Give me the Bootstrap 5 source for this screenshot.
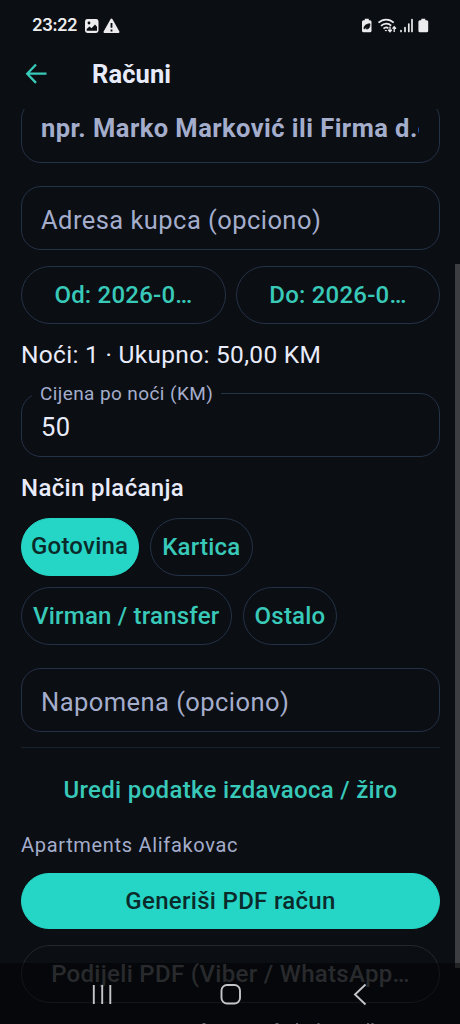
<!DOCTYPE html>
<html lang="bs">
<head>
<meta charset="utf-8">
<meta name="viewport" content="width=device-width, initial-scale=1">
<title>Računi</title>
<link href="https://cdn.jsdelivr.net/npm/bootstrap@5.3.0/dist/css/bootstrap.min.css" rel="stylesheet">
<style>
:root{--bg:#0b0e13;--teal:#25d6c7;--line:#243246;--muted:#a4adcb;--ink:#e8ebfa}
body{background:var(--bg);color:var(--ink);font-family:Roboto,"Noto Sans",sans-serif;height:1024px;overflow:hidden;line-height:1;white-space:nowrap}
.phone{width:460px;height:1024px}
.statusbar{height:50px;padding:1px 31px 0 32px;color:#ececee}
.clock{font-family:Inter,Roboto,sans-serif;font-size:17px;font-weight:600;letter-spacing:-.6px}
.topbar{height:59px;padding:0 0 11px 25px}
.topbar h1{font-size:25.5px;font-weight:700;margin-left:44px;padding-top:1px;letter-spacing:.1px}
.scroll-area{height:915px;overflow:hidden;padding:0 20px 0 21px}
.field{height:64px;border:1px solid var(--line);border-radius:20px;padding:5px 19px 0;color:var(--muted);font-size:25.5px;letter-spacing:.45px;position:relative}
.field.first{margin-top:-10px;font-weight:700;letter-spacing:.45px;padding:0 20px 4px 19px}
.field.priced{color:var(--ink);padding-top:6px;letter-spacing:.3px}
.pill{height:58px;border:1px solid var(--line);border-radius:29px;color:#38c9b9;font-size:24px;font-weight:500;letter-spacing:.22px;padding:0 11px;line-height:1}
.pill:hover{border-color:var(--line);color:#38c9b9}
.pill.on,.pill.on:hover{background:var(--teal);border-color:var(--teal);color:#0b2b2b}
.pill.tight{padding:0 10px 2px 9px}
.pill.main-action{height:56px;letter-spacing:.3px}
.pill.share:disabled{border-color:#24272c;color:#4a4d52;opacity:1;height:58px;letter-spacing:.3px}
.floating{position:absolute;left:10px;top:-11px;padding:0 8px;background:var(--bg);color:var(--muted);font-size:19px;line-height:22px;letter-spacing:.4px}
.summary{height:69px;font-size:24.5px;padding-bottom:7px;letter-spacing:.3px}
.section-title{height:61px;font-size:24px;font-weight:500;letter-spacing:.35px}
.rule{height:1px;background:#1a222d;margin-top:15px}
.edit-link{font-size:24px;font-weight:500;color:#38c9b9;letter-spacing:.32px;margin-top:30px}
.issuer{font-size:20px;color:var(--muted);letter-spacing:.68px;margin-top:33px}
.thumb{position:absolute;right:0;top:264px;width:5px;height:704px;background:#3c3e42}
.navshade{position:absolute;left:0;right:0;bottom:0;height:61px;background:rgba(0,0,0,.45)}
.navshade svg{display:block}
</style>
</head>
<body>
<div class="phone position-relative">
  <header class="statusbar d-flex align-items-center">
    <span class="clock">23:22</span>
    <svg class="ms-2" width="36" height="16" viewBox="0 0 36 16"><rect x="0" y="1" width="13.5" height="14" rx="2.4" fill="#ececee"/><circle cx="4" cy="5" r="1.4" fill="#0b0e13"/><path d="M1.7 12.800V11l2.800-2.500 2 1.800L10 6.500l2 2.300v4z" fill="#0b0e13"/><path d="M26.500 1.500 33.500 14H19.500z" fill="#ececee" stroke="#ececee" stroke-width="2" stroke-linejoin="round"/><path d="M26.500 5v4.800M26.500 11.500v2" stroke="#0b0e13" stroke-width="1.800"/></svg>
    <svg class="ms-auto" width="68" height="16" viewBox="0 0 68 16" fill="none"><path d="M3.800.8h4v1.500H9q1.500 0 1.500 1.500v9q0 1.500-1.500 1.500H2.500Q1 14.300 1 12.800v-9q0-1.500 1.500-1.500h1.300z" fill="#ececee"/><path d="M3 11.200C2.500 7 6 6 9 5.800c0 4-1.500 6-4.300 4.800L7 8.300" fill="#0b0e13" stroke="#0b0e13" stroke-width=".7"/><path d="M17.500 4.700c4.600-4.200 10.800-4.200 15.200 0M20 7.900c3-2.900 7.400-2.900 10.200-.3M22.500 10.700c1.500-1.500 3.500-1.500 4.900-.4" stroke="#ececee" stroke-width="1.700"/><path d="m23.500 12 1.500 1.600 1.300-1.600z" fill="#ececee"/><path d="M29 8.500v5m-1.800-1.700 1.800 2 1.800-2M33.200 14V9m-1.700 1.700 1.700-2 1.800 2" stroke="#ececee" stroke-width="1.300"/><path d="M40 12.500v1M44 9.500v4M47.800 6v7.500M51 1.500v12" stroke="#ececee" stroke-width="1.700" stroke-linecap="round"/><path d="M60.300.8h4v1.500h1.400q1.500 0 1.500 1.500v9q0 1.500-1.500 1.500h-6.800q-1.500 0-1.500-1.500v-9q0-1.500 1.500-1.500h1.400z" fill="#ececee"/></svg>
  </header>
  <nav class="topbar d-flex align-items-center">
    <svg width="23" height="22" viewBox="0 0 23 22" fill="none" stroke="#38c9b9" stroke-width="2.300"><path d="M11 1.500 2.200 10.700l8.800 9.200M2.200 10.700H21.500"/></svg>
    <h1 class="mb-0">Računi</h1>
  </nav>
  <main class="scroll-area">
    <div class="field first d-flex align-items-center"><span class="overflow-hidden py-2">npr. Marko Marković ili Firma d.o.o.</span></div>
    <div class="field d-flex align-items-center" style="margin-top:23px"><span>Adresa kupca (opciono)</span></div>
    <div class="d-flex" style="gap:10px;margin-top:16px">
      <button class="btn pill flex-fill">Od: 2026-0…</button>
      <button class="btn pill flex-fill">Do: 2026-0…</button>
    </div>
    <div class="summary d-flex align-items-center">Noći: 1 · Ukupno: 50,00 KM</div>
    <div class="field priced d-flex align-items-center"><span class="floating">Cijena po noći (KM)</span><span>50</span></div>
    <div class="section-title d-flex align-items-center">Način plaćanja</div>
    <div class="d-flex flex-wrap" style="gap:11px">
      <button class="btn pill on tight">Gotovina</button><button class="btn pill">Kartica</button>
      <button class="btn pill">Virman / transfer</button><button class="btn pill">Ostalo</button>
    </div>
    <div class="field d-flex align-items-center" style="margin-top:23px"><span>Napomena (opciono)</span></div>
    <div class="rule"></div>
    <div class="edit-link text-center">Uredi podatke izdavaoca / žiro</div>
    <div class="issuer">Apartments Alifakovac</div>
    <button class="btn pill on main-action d-block w-100" style="margin-top:18px">Generiši PDF račun</button>
    <button class="btn pill share d-block w-100" style="margin-top:16px" disabled>Podijeli PDF (Viber / WhatsApp…</button>
  </main>
  <div class="thumb"></div>
  <footer class="navshade">
    <svg width="460" height="61" viewBox="0 0 460 61" fill="none" stroke="#c4c5c8" stroke-width="1.900"><path d="M93.800 22v19M102.200 22v19M110.300 22v19"/><rect x="221.500" y="22" width="18.500" height="18.500" rx="5.500"/><path d="m365.500 21.500-10.500 10 10.500 10"/><path d="M202.500 60.500h3M275.500 60.500h3M296 60.500h2M317.500 60.500h2M367 60.500h2M371.500 60.500h2" stroke="#5c6070" stroke-width="1"/></svg>
  </footer>
</div>
<script src="https://cdn.jsdelivr.net/npm/bootstrap@5.3.0/dist/js/bootstrap.bundle.min.js"></script>
</body>
</html>
